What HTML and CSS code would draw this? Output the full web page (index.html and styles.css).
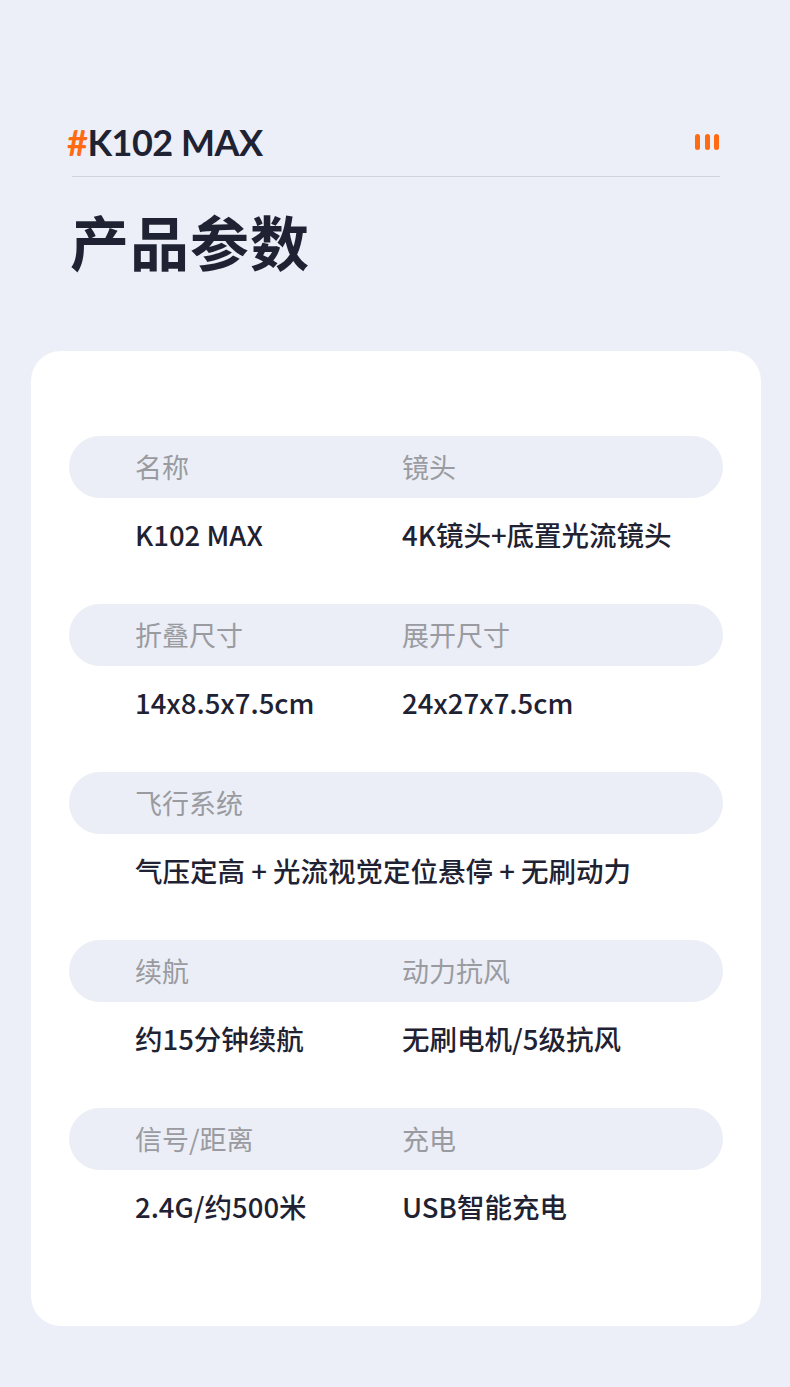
FILE: index.html
```html
<!DOCTYPE html>
<html lang="zh-CN">
<head>
<meta charset="utf-8">
<link rel="stylesheet" href="styles.css">
</head>
<body>
<div class="page">
  <div class="header">
    <div class="model"><span class="hash">#</span>K102 MAX</div>
    <div class="bars"><span></span><span></span><span></span></div>
  </div>
  <div class="divider"></div>
  <h1 class="title">产品参数</h1>
  <div class="card">
    <div class="group">
      <div class="pill row"><span>名称</span><span>镜头</span></div>
      <div class="value row"><span>K102 MAX</span><span>4K镜头+底置光流镜头</span></div>
    </div>
    <div class="group">
      <div class="pill row"><span>折叠尺寸</span><span>展开尺寸</span></div>
      <div class="value row"><span>14x8.5x7.5cm</span><span>24x27x7.5cm</span></div>
    </div>
    <div class="group">
      <div class="pill row"><span>飞行系统</span></div>
      <div class="value row"><span class="wide">气压定高 + 光流视觉定位悬停 + 无刷动力</span></div>
    </div>
    <div class="group">
      <div class="pill row"><span>续航</span><span>动力抗风</span></div>
      <div class="value row"><span>约15分钟续航</span><span>无刷电机/5级抗风</span></div>
    </div>
    <div class="group">
      <div class="pill row"><span>信号/距离</span><span>充电</span></div>
      <div class="value row"><span>2.4G/约500米</span><span>USB智能充电</span></div>
    </div>
  </div>
</div>
</body>
</html>
```

FILE: styles.css
```css
html, body {
  margin: 0;
  padding: 0;
  background: #eceff7;
}
body {
  font-family: "Noto Sans CJK SC", "Noto Sans", sans-serif;
  color: #1f2232;
}
.page {
  width: 790px;
  height: 1387px;
  overflow: hidden;
  padding-top: 122px;
  box-sizing: border-box;
}
.header {
  display: flex;
  justify-content: space-between;
  align-items: center;
  padding: 0 71px 0 67px;
  height: 40px;
}
.model {
  font-family: "Lato", "Liberation Sans", sans-serif;
  font-weight: 700;
  font-size: 36px;
  line-height: 40px;
  color: #1f2232;
  letter-spacing: -0.5px;
}
.hash {
  color: #ff6a13;
}
.bars {
  display: flex;
  gap: 4.5px;
}
.bars span {
  width: 5px;
  height: 16px;
  border-radius: 2.5px;
  background: #ff6a13;
}
.divider {
  margin: 14px 70px 0 72px;
  height: 1px;
  background: #d2d4dc;
}
.title {
  margin: 29px 0 0 70px;
  font-size: 59px;
  line-height: 70px;
  font-weight: 700;
  color: #1f2232;
  letter-spacing: 1px;
}
.card {
  margin: 75px 29px 0 31px;
  background: #ffffff;
  border-radius: 30px;
  padding: 85px 38px 102px;
}
.group + .group {
  margin-top: 52px;
}
.row {
  display: grid;
  grid-template-columns: 267px 1fr;
  padding-left: 66px;
}
.pill {
  height: 62px;
  border-radius: 31px;
  background: #ebeef6;
  align-items: center;
  font-size: 27px;
  color: #9a9ba0;
  line-height: 62px;
}
.value {
  margin-top: 18px;
  font-size: 27.5px;
  line-height: 36px;
  font-weight: 500;
  color: #1f2232;
}
.wide {
  grid-column: 1 / 3;
}
```
